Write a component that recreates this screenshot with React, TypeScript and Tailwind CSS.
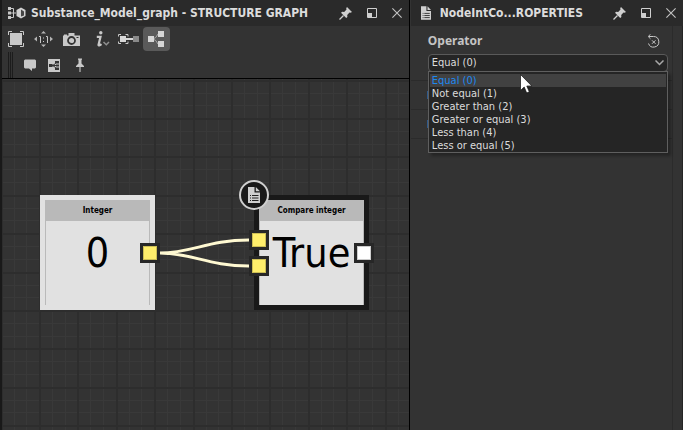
import React, { useState } from 'react';

const OPERATORS = [
  'Equal (0)',
  'Not equal (1)',
  'Greater than (2)',
  'Greater or equal (3)',
  'Less than (4)',
  'Less or equal (5)',
];

// One grid tile holds five major cells, each split in three
const MAJOR_LINES = [0, 38, 77, 115, 154];
const MINOR_LINES = [13, 26, 51, 64, 90, 102, 128, 141, 167, 179];

function GraphIcon() {
  return (
    <svg width="18" height="14" viewBox="0 0 18 14" aria-hidden="true">
      <path d="M2 2.5h3.5v9H2M2 7h6" fill="none" stroke="#c8c8c8" />
      <path d="M0 1h3v3H0zM0 5.500h3v3H0zM0 10h3v3H0z" fill="#c8c8c8" />
      <path d="M13 1.500l4.500 2.500v6L13 12.500 8.500 10V4z" fill="#d2d2d2" />
      <path d="M13 3.500l3 2v4L13 10.500z" fill="#444" />
    </svg>
  );
}

function DocumentIcon({ className }: { className: string }) {
  return (
    <svg className={className} viewBox="0 0 12 16" aria-hidden="true">
      <path d="M0 0h6.500v5.500H12V16H0z" fill="#cfcfcf" />
      <path d="M7.800 0L12 4.300H7.800z" fill="#cfcfcf" />
      <path d="M2 8.500h1M4 8.500h6.500M2 11h1M4 11h6.500M2 13.500h1M4 13.500h6.500" stroke="#222" />
    </svg>
  );
}

function PinIcon() {
  return (
    <svg width="13" height="13" viewBox="0 0 13 13" aria-hidden="true">
      <path d="M8 0l5 5-1.500.8-1-.3L8.200 8l.2 2-1.200 1L2 5.800l1.200-1 2 .2L7.500 2.600 7.200 1.200z" fill="#cfcfcf" />
      <path d="M4.500 8.500L.5 12.500" stroke="#cfcfcf" strokeWidth="1.300" />
    </svg>
  );
}

function PanelButtons() {
  return (
    <div className="flex shrink-0 items-center gap-[15px]">
      <button type="button" aria-label="Pin"><PinIcon /></button>
      <button type="button" aria-label="Float">
        <svg width="10" height="10" viewBox="0 0 10 10" aria-hidden="true">
          <path d="M.5.5h9v9h-9z" fill="none" stroke="#cfcfcf" />
          <path d="M1 5h4v4H1z" fill="#cfcfcf" />
        </svg>
      </button>
      <button type="button" aria-label="Close">
        <svg width="10" height="10" viewBox="0 0 10 10" aria-hidden="true">
          <path d="M.4.400l9.200 9.200M9.600.4L.4 9.600" stroke="#c4c4c4" strokeWidth="1.100" />
        </svg>
      </button>
    </div>
  );
}

function PanelHeader({ icon, title }: { icon: React.ReactNode; title: string }) {
  return (
    <header className="flex h-[26px] items-center bg-[#2a2a2a] pr-[7px] text-[#dcdcdc]">
      <div className="flex w-[29px] shrink-0 items-center pl-1.5 [&_svg]:block">{icon}</div>
      <h2 className="min-w-0 flex-1 truncate text-xs font-bold">{title}</h2>
      <PanelButtons />
    </header>
  );
}

function Toolbar() {
  return (
    <div className="border-b border-black bg-[#333] [&_svg]:block">
      <div className="flex h-[26px] items-center pl-1.5">
        <button type="button" aria-label="Fit view" className="mr-2.5">
          <svg width="16" height="16" viewBox="0 0 16 16" aria-hidden="true">
            <path d="M2 2h12v12H2z" fill="#c8c8c8" />
            <path d="M.5 4V.5H4M12 .5h3.500V4M15.500 12v3.500H12M4 15.500H.5V12" fill="none" stroke="#c8c8c8" />
          </svg>
        </button>
        <button type="button" aria-label="Actual size" className="mr-2.5">
          <svg width="19" height="16" viewBox="0 0 19 16" aria-hidden="true">
            <path d="M9.500 0L12 2.500H7zM9.500 16L12 13.500H7zM0 8l3-2.500v5zM19 8l-3-2.500v5z" fill="#b4b4b4" />
            <path d="M5 5.500h1.500V12M12 5.500h1.500V12" fill="none" stroke="#c8c8c8" />
            <path d="M9 6.500h1v1H9zM9 10h1v1H9z" fill="#c8c8c8" />
          </svg>
        </button>
        <button type="button" aria-label="Screenshot" className="mr-4">
          <svg width="17" height="15" viewBox="0 0 17 15" aria-hidden="true">
            <path d="M0 3.500h1v-1h3v1h1.500V1h6v2.500H17V14H0z" fill="#c8c8c8" />
            <circle cx="8.500" cy="8.500" r="3.500" fill="#c8c8c8" stroke="#333" strokeWidth="1.800" />
            <path d="M13.500 5h2v1h-2z" fill="#333" />
          </svg>
        </button>
        <button type="button" aria-label="Information" className="mr-2">
          <svg width="14" height="16" viewBox="0 0 14 16" aria-hidden="true">
            <circle cx="4.800" cy="1.700" r="1.700" fill="#c8c8c8" />
            <path d="M.8 5.800h3.700L2.500 14q0 1.200 3-.8" fill="none" stroke="#c8c8c8" strokeWidth="2.200" />
            <path d="M7.500 11l2.800 2.800L13 11" fill="none" stroke="#909090" strokeWidth="1.500" />
          </svg>
        </button>
        <button type="button" aria-label="Link mode" className="mr-1">
          <svg width="21" height="12" viewBox="0 0 21 12" aria-hidden="true">
            <path d="M.5 3.500v-2h2.500M7.500 1.500H10v2M10 8.500v2H7.500M3 10.500H.5v-2" fill="none" stroke="#c8c8c8" />
            <path d="M8 6h8" stroke="#d8d8d8" strokeWidth="2" />
            <path d="M2 3h6v6H2z" fill="#d8d8d8" />
            <path d="M15 3h6v6h-6z" fill="#8a8a8a" />
          </svg>
        </button>
        <button type="button" aria-label="Node links" aria-pressed="true" className="rounded-sm bg-[#5a5a5a] px-[5px] py-1">
          <svg width="17" height="16" viewBox="0 0 17 16" aria-hidden="true">
            <path d="M5 8q3-.5 5-5M5 8q3 .5 5 5" fill="none" stroke="#a8a8a8" />
            <path d="M0 5h6v6H0zM10 0h6v6h-6zM10 10h6v6h-6z" fill="#d6d6d6" />
          </svg>
        </button>
      </div>
      <div className="flex h-[26px] items-center pl-1.5">
        <div className="mr-[11px] flex h-full gap-px">
          <span className="w-px bg-[#1c1c1c]" />
          <span className="w-px bg-[#1c1c1c]" />
          <span className="w-px bg-[#1c1c1c]" />
        </div>
        <button type="button" aria-label="Comment" className="mr-3">
          <svg width="12" height="13" viewBox="0 0 12 13" aria-hidden="true">
            <path d="M1 .5h10l1 1v7l-1 1H8V12L5 9.500H1l-1-1v-7z" fill="#c8c8c8" />
          </svg>
        </button>
        <button type="button" aria-label="Frame" className="mr-4">
          <svg width="12" height="13" viewBox="0 0 12 13" aria-hidden="true">
            <path d="M0 0h12v13H0z" fill="#c8c8c8" />
            <path d="M4 6.500Q7 6 8 3.500M4 6.500h5M4 6.500Q7 7 8 9.500" fill="none" stroke="#333" />
            <path d="M1 5h3.500v3H1zM7 2h4v2.500H7zM8 5.500h3v2H8zM7 8.500h4V11H7z" fill="#333" />
          </svg>
        </button>
        <button type="button" aria-label="Add pin">
          <svg width="8" height="15" viewBox="0 0 8 15" aria-hidden="true">
            <path d="M2 .5h4v1L5.500 2v3.500L8 8v1H0V8l2.500-2.500V2L2 1.500z" fill="#c8c8c8" />
            <path d="M4 9v5" stroke="#b0b0b0" strokeWidth="1.300" />
          </svg>
        </button>
      </div>
    </div>
  );
}

function Port({ className, fill }: { className: string; fill: string }) {
  return (
    <span className={`absolute size-5 border-[3px] border-[#272727] ${className}`}>
      <span className={`block size-full border border-black/20 ${fill}`} />
    </span>
  );
}

interface NodeProps {
  title: string;
  value: string;
  className: string;
  children: React.ReactNode;
}

function GraphNode({ title, value, className, children }: NodeProps) {
  return (
    <article className={`absolute size-[115px] border-[5px] text-black ${className}`}>
      <div className="flex h-full flex-col border-x border-[#b9b9b9] bg-[#e1e1e1]">
        <h3 className="flex h-[21px] items-center justify-center bg-[#b9b9b9] text-[8px] font-bold">{title}</h3>
        <p className="flex justify-center text-[41px] leading-[64px]">{value}</p>
      </div>
      {children}
    </article>
  );
}

function GraphCanvas() {
  return (
    <div className="relative flex-1 overflow-hidden bg-[#333]">
      <svg className="absolute inset-0 size-full" aria-hidden="true">
        <defs>
          <pattern id="grid" x="37" y="39" width="192" height="192" patternUnits="userSpaceOnUse">
            {MINOR_LINES.map((n) => (
              <g key={n} fill="#393939">
                <rect x={n} width="1" height="192" />
                <rect y={n} width="192" height="1" />
              </g>
            ))}
            {MAJOR_LINES.map((n) => (
              <g key={n} fill="#2d2d2d">
                <rect x={n} width="2" height="192" />
                <rect y={n} width="192" height="2" />
              </g>
            ))}
          </pattern>
        </defs>
        <rect width="100%" height="100%" fill="url(#grid)" />
      </svg>

      <GraphNode title="Integer" value="0" className="left-[38px] top-[116px] border-[#e1e1e1]">
        <Port className="-right-[10px] top-[43px]" fill="bg-[#ffee6b]" />
      </GraphNode>

      <GraphNode title="Compare integer" value="True" className="left-[252px] top-[116px] border-[#191919]">
        <Port className="-left-[10px] top-[30px]" fill="bg-[#ffee6b]" />
        <Port className="-left-[10px] top-[56px]" fill="bg-[#ffee6b]" />
        <Port className="-right-[10px] top-[43px]" fill="bg-[#fff]" />
        <span className="absolute -left-5 -top-5 flex size-[30px] items-center justify-center rounded-full border-2 border-[#cfcfcf] bg-[#191919]">
          <DocumentIcon className="h-4 w-3" />
        </span>
      </GraphNode>

      <svg className="absolute inset-0 size-full" aria-hidden="true">
        <path
          d="M158 174C190 174 206 161 247 161M158 174C190 174 206 187 247 187"
          fill="none"
          stroke="#fff9d2"
          strokeWidth="3"
        />
      </svg>
    </div>
  );
}

function OperatorField() {
  const [value, setValue] = useState(OPERATORS[0]);

  return (
    <section className="pl-[17px] pr-4 pt-0.5">
      <div className="flex h-[26px] items-center justify-between pr-2">
        <label htmlFor="operator" className="font-['Noto_Sans',sans-serif] text-xs font-bold text-[#c4c4c4]">Operator</label>
        <button type="button" aria-label="Reset">
          <svg className="block" width="13" height="14" viewBox="0 0 13 14" aria-hidden="true">
            <path d="M2 2.500h4.500a5.300 5.300 0 1 1-5 7" fill="none" stroke="#c8c8c8" />
            <path d="M3.500.3L1.200 2.500l2.300 2.300" fill="none" stroke="#c8c8c8" />
            <path d="M5 6.300l3.500 3.500M8.500 6.300L5 9.800" stroke="#c8c8c8" />
          </svg>
        </button>
      </div>
      <div className="relative">
        <select
          id="operator"
          value={value}
          onChange={(e) => setValue(e.target.value)}
          className="block h-[18px] w-full appearance-none rounded-sm border border-[#5a5a5a] bg-[#252525] px-[3px] text-[11px] leading-4 text-[#dcdcdc]"
        >
          {OPERATORS.map((name) => (
            <option key={name}>{name}</option>
          ))}
        </select>
        <svg className="pointer-events-none absolute right-1 top-1.5" width="9" height="6" viewBox="0 0 9 6" aria-hidden="true">
          <path d="M.5.500l4 4 4-4" fill="none" stroke="#a8a8a8" strokeWidth="1.500" />
        </svg>
        <ul
          role="listbox"
          aria-label="Operator"
          className="absolute inset-x-0 top-[17px] z-10 border border-[#5f5f5f] bg-[#252525] px-px pt-0.5 text-[11px] leading-[13px] text-[#dcdcdc] shadow-[3px_3px_3px_rgba(0,0,0,0.3)]"
        >
          {OPERATORS.map((name) => (
            <li
              key={name}
              role="option"
              aria-selected={name === value}
              onClick={() => setValue(name)}
              className={name === value ? 'bg-[#414141] px-0.5 text-[#1e88f0]' : 'px-0.5'}
            >
              {name}
            </li>
          ))}
        </ul>
        <svg className="absolute left-[92px] top-5 z-20" width="12" height="20" viewBox="0 0 12 20" aria-hidden="true">
          <path d="M.5.500v16l3.700-3.500 2.500 6 2.600-1.200-2.500-5.800h5z" fill="#fff" stroke="#111" strokeWidth=".7" />
        </svg>
      </div>
    </section>
  );
}

function CollapsedSection() {
  return (
    <div className="h-[29px] border-t border-[#2b2b2b] px-4 py-2.5">
      <span className="block h-2 w-0.5 bg-[#2f5a8c]" />
    </div>
  );
}

export default function App() {
  return (
    <main className="flex min-h-screen bg-[#333] font-['DejaVu_Sans_Condensed','Noto_Sans',sans-serif]">
      <section className="flex min-w-0 flex-1 flex-col border-l-2 border-r border-l-[#191919] border-r-black">
        <PanelHeader icon={<GraphIcon />} title="Substance_Model_graph - STRUCTURE GRAPH" />
        <Toolbar />
        <GraphCanvas />
      </section>
      <aside className="flex w-2/5 min-w-[272px] flex-col pl-px">
        <PanelHeader
          icon={<div className="pl-1"><DocumentIcon className="h-3.5 w-2.5" /></div>}
          title="NodeIntCo...ROPERTIES"
        />
        <div className="flex flex-1 border-r border-[#242424]">
          <div className="min-w-0 flex-1">
            <div className="-mr-3 h-[54px]"><OperatorField /></div>
            <CollapsedSection />
            <CollapsedSection />
            <div className="border-t border-[#2b2b2b]" />
          </div>
          <div className="w-2.5 border-l border-[#2b2b2b]" />
        </div>
      </aside>
    </main>
  );
}
